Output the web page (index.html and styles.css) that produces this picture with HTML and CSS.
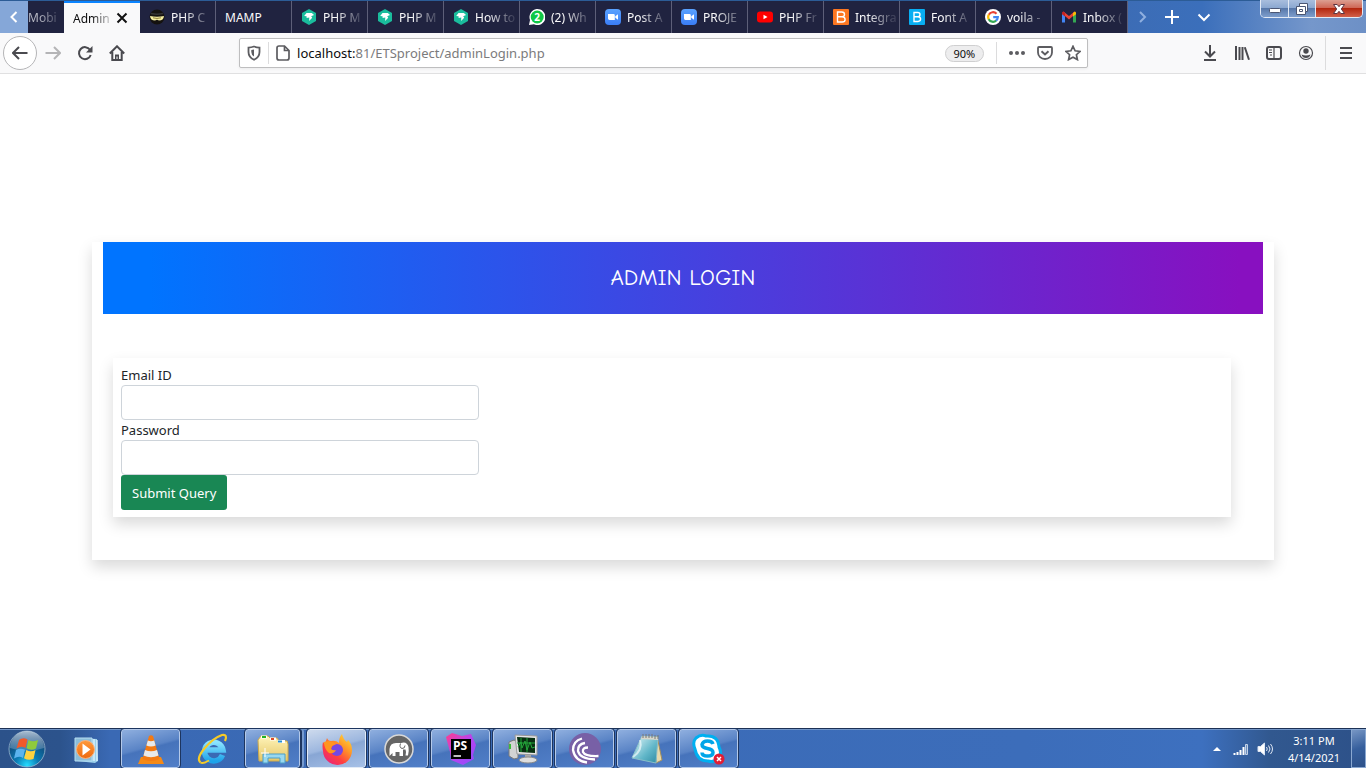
FILE: index.html
```html
<!DOCTYPE html>
<html lang="en">
<head>
<meta charset="utf-8">
<title>Admin Login</title>
<link rel="stylesheet" href="styles.css">
</head>
<body>
<svg class="defs" width="0" height="0" aria-hidden="true">
  <defs>
    <linearGradient id="zoomBlue" x1="0" y1="0" x2="0" y2="1"><stop offset="0" stop-color="#5aa2ff"/><stop offset="1" stop-color="#3a7df5"/></linearGradient>
    <linearGradient id="orange" x1="0" y1="0" x2="0" y2="1"><stop offset="0" stop-color="#ff9a3c"/><stop offset="1" stop-color="#ee6a10"/></linearGradient>
    <radialGradient id="orb" cx=".5" cy=".95" r=".8"><stop offset="0" stop-color="#25dcff"/><stop offset=".4" stop-color="#0b7cb4"/><stop offset="1" stop-color="#12406f"/></radialGradient>
    <linearGradient id="shine" x1="0" y1="0" x2="0" y2="1"><stop offset="0" stop-color="#dce8f2"/><stop offset="1" stop-color="#7fa3c4" stop-opacity=".5"/></linearGradient>
    <linearGradient id="ie" x1="0" y1="0" x2="0" y2="1"><stop offset="0" stop-color="#8ce4ff"/><stop offset="1" stop-color="#1da3ea"/></linearGradient>
    <linearGradient id="fox" x1="1" y1="0" x2=".2" y2="1"><stop offset="0" stop-color="#ffe83f"/><stop offset=".4" stop-color="#ff9527"/><stop offset=".7" stop-color="#ff4040"/><stop offset="1" stop-color="#e8237f"/></linearGradient>
    <linearGradient id="storm" x1="0" y1="0" x2="1" y2="1"><stop offset="0" stop-color="#ff3c8d"/><stop offset=".5" stop-color="#b744f0"/><stop offset="1" stop-color="#8d4cff"/></linearGradient>
    <linearGradient id="pad" x1="0" y1="0" x2="1" y2="1"><stop offset="0" stop-color="#e6f8fa"/><stop offset=".6" stop-color="#62b7c9"/><stop offset="1" stop-color="#2e8ba3"/></linearGradient>
    <linearGradient id="folder" x1="0" y1="0" x2="0" y2="1"><stop offset="0" stop-color="#fff4ba"/><stop offset="1" stop-color="#e5c767"/></linearGradient>
    <symbol id="gem" viewBox="0 0 16 16"><path d="M8 0l7 4v8l-7 4-7-4V4z" fill="#1abc9c"/><path d="M3.200 7l2.300-3h5.300L13 6l-2.800 1.300 1 1.400-3.100 3.200.2-3.300L5.600 9V7.300z" fill="#fff"/></symbol>
    <symbol id="camera" viewBox="0 0 16 16"><rect width="16" height="16" rx="4" fill="url(#zoomBlue)"/><path d="M3 5h5.500q1.300 0 1.300 1.300V11H4.400Q3 11 3 9.600zM10.300 7.300L13 5.300v5.400l-2.700-2z" fill="#fff"/></symbol>
  </defs>
</svg>
<div class="window">
  <header class="tabstrip">
    <button class="scroll-left" aria-label="Scroll tabs left"><svg width="12" height="14" viewBox="0 0 12 14"><path d="M8.500 2L3.500 7l5 5" fill="none" stroke="#fff" stroke-width="2"/></svg></button>
    <nav class="tabs">
      <a href="#" class="tab tab-cut"><span class="tab-label">Mobi</span></a>
      <a href="#" class="tab tab-active"><span class="tab-label">Admin</span><svg width="12" height="12" viewBox="0 0 12 12"><path d="M1.500 1.500l9 9m0-9l-9 9" stroke="#111" stroke-width="2"/></svg></a>
      <a href="#" class="tab"><svg width="16" height="16" viewBox="0 0 16 16"><circle cx="8" cy="8" r="7.500" fill="#15120f"/><path d="M2 4.500q6 1.500 12 0" stroke="#353535" stroke-width="1.500" fill="none"/><path d="M1 7q7 1.500 14 0-.5 4.500-5 4.500L8 10.800l-2 .7Q1.500 11.500 1 7z" fill="#f3eda1"/><path d="M4 8.800q4 1.300 8 0" stroke="#94823b" fill="none"/></svg><span class="tab-label">PHP C</span></a>
      <a href="#" class="tab"><span class="tab-label tab-whole">MAMP</span></a>
      <a href="#" class="tab"><svg width="16" height="16"><use href="#gem"/></svg><span class="tab-label">PHP M</span></a>
      <a href="#" class="tab"><svg width="16" height="16"><use href="#gem"/></svg><span class="tab-label">PHP M</span></a>
      <a href="#" class="tab"><svg width="16" height="16"><use href="#gem"/></svg><span class="tab-label">How to</span></a>
      <a href="#" class="tab"><svg width="16" height="16" viewBox="0 0 16 16"><path d="M0 16l1-5A8 8 0 1 1 5 15.300z" fill="#fff"/><circle cx="8.200" cy="8" r="6.500" fill="#10c846"/><text x="8" y="12" text-anchor="middle" class="badge-count">2</text></svg><span class="tab-label">(2) Wh</span></a>
      <a href="#" class="tab"><svg width="16" height="16"><use href="#camera"/></svg><span class="tab-label">Post A</span></a>
      <a href="#" class="tab"><svg width="16" height="16"><use href="#camera"/></svg><span class="tab-label">PROJE</span></a>
      <a href="#" class="tab"><svg width="16" height="16" viewBox="0 0 16 16"><rect y="2.500" width="16" height="11" rx="3" fill="#f00"/><path d="M6.500 5.800v4.400L10.500 8z" fill="#fff"/></svg><span class="tab-label">PHP Fr</span></a>
      <a href="#" class="tab"><svg width="16" height="16" viewBox="0 0 16 16"><rect width="16" height="16" rx="1" fill="#fd7721"/><path d="M4.500 3h4.300q2.700 0 2.700 2.400 0 2.200-2.700 2.400H4.500zM4.500 7.800h4.600q3 .1 3 2.600T9.100 13H4.500z" fill="none" stroke="#fff" stroke-width="1.400"/></svg><span class="tab-label">Integra</span></a>
      <a href="#" class="tab"><svg width="16" height="16" viewBox="0 0 16 16"><rect width="16" height="16" rx="1" fill="#08aef2"/><path d="M5 3.500h3.700q2.300 0 2.300 2 0 2.200-2.300 2.200H5zM5 7.700h4q2.600.1 2.600 2.400T9 12.500H5z" fill="none" stroke="#fff" stroke-width="1.400"/></svg><span class="tab-label">Font A</span></a>
      <a href="#" class="tab"><svg width="16" height="16" viewBox="0 0 16 16"><circle cx="8" cy="8" r="8" fill="#fff"/><g fill="none" stroke-width="2.200"><path d="M11.500 4.700A4.800 4.800 0 0 0 3.800 5.700" stroke="#ea4335"/><path d="M3.900 5.500a4.800 4.800 0 0 0 0 5" stroke="#fbbc05"/><path d="M3.700 10.200a4.800 4.800 0 0 0 7.500 1.300" stroke="#34a853"/><path d="M11 11.700A4.800 4.800 0 0 0 12.800 8.200H8.200" stroke="#4285f4"/></g></svg><span class="tab-label">voila -</span></a>
      <a href="#" class="tab"><svg width="16" height="16" viewBox="0 0 16 16"><path d="M1 4v9.500h3V7z" fill="#4285f4"/><path d="M12 7v6.500h3V4z" fill="#34a853"/><path d="M1 4.500L2.500 2.500 8 7l5.500-4.500L15 4.500 8 10.500z" fill="#ea4335"/><path d="M12 4l1.800-1.500Q15 2.500 15 4v1.300l-3 2.300z" fill="#fbbc04"/><path d="M1 4q0-1.500 1.500-1.500L4 4v3.600L1 5.300z" fill="#c5221f"/></svg><span class="tab-label">Inbox (</span></a>
    </nav>
    <div class="tab-tools">
      <button class="dim" aria-label="Scroll tabs right"><svg width="16" height="16" viewBox="0 0 16 16"><path d="M6 3l5 5-5 5" fill="none" stroke="#8fafdf" stroke-width="2"/></svg></button>
      <button aria-label="New tab"><svg width="16" height="16" viewBox="0 0 16 16"><path d="M8 1v14M1 8h14" stroke="#fff" stroke-width="2"/></svg></button>
      <button aria-label="List all tabs"><svg width="16" height="16" viewBox="0 0 16 16"><path d="M2.500 5.500L8 11l5.500-5.500" fill="none" stroke="#fff" stroke-width="2"/></svg></button>
    </div>
    <div class="window-controls">
      <button class="minimize" aria-label="Minimize"><svg width="14" height="12" viewBox="0 0 14 12"><rect x="1.500" y="5.500" width="11" height="4" rx="1" fill="#fff" stroke="#4b5673"/></svg></button>
      <button class="restore" aria-label="Restore"><svg width="14" height="14" viewBox="0 0 14 14"><path d="M4.500 1.500h8v8h-2v3h-9v-8h3z" fill="#fff" stroke="#4b5673"/><path d="M4.500 4.500h6v5M4.500 7.500h3v2h-3z" fill="none" stroke="#4b5673"/></svg></button>
      <button class="close" aria-label="Close"><svg width="14" height="12" viewBox="0 0 14 12"><path d="M1.500 1.500h3.700L7 3.700l1.800-2.200h3.700L9.300 6l3.200 4.500H8.800L7 8.300l-1.800 2.200H1.500L4.700 6z" fill="#fff" stroke="#5e3440"/></svg></button>
    </div>
  </header>

  <div class="toolbar">
    <div class="nav-buttons">
      <button class="back" aria-label="Back"><svg width="16" height="16" viewBox="0 0 16 16"><path d="M15.500 8H1.500M7 2L1 8l6 6" fill="none" stroke="#4a4a4f" stroke-width="2"/></svg></button>
      <button aria-label="Forward"><svg width="16" height="16" viewBox="0 0 16 16"><path d="M.5 8h14M9 2l6 6-6 6" fill="none" stroke="#b4b4b6" stroke-width="2"/></svg></button>
      <button aria-label="Reload"><svg width="16" height="16" viewBox="0 0 16 16"><path d="M13 4.800A6 6 0 1 0 13.700 10" fill="none" stroke="#4a4a4f" stroke-width="2"/><path d="M15.500 1v6.500H9z" fill="#4a4a4f"/></svg></button>
      <button aria-label="Home"><svg width="16" height="16" viewBox="0 0 16 16"><path d="M.8 8.500L8 1.300l7.200 7.200M3.300 7v7.900h9.400V7" fill="none" stroke="#4a4a4f" stroke-width="2"/><path d="M6 15V9.500h4V15z" fill="#4a4a4f"/><path d="M8 11.500v2.500" stroke="#fff"/></svg></button>
    </div>
    <div class="urlbar">
      <button aria-label="Tracking protection"><svg width="16" height="16" viewBox="0 0 16 16"><path d="M8 1.500q2.800.8 5.500 1.100V7q0 5.300-5.500 7.700Q2.500 12.300 2.500 7V2.600Q5.200 2.300 8 1.500z" fill="none" stroke="#5c5c60" stroke-width="1.800"/><path d="M8 4.500v7Q5.300 9.800 5.300 7V5z" fill="#5c5c60"/></svg></button>
      <span class="rule"></span>
      <svg class="page-icon" width="14" height="16" viewBox="0 0 14 16"><path d="M3 1h5.500L13 5.500V13q0 2-2 2H3q-2 0-2-2V3q0-2 2-2zM8.500 1v4.500H13" fill="none" stroke="#5c5c60" stroke-width="1.700"/></svg>
      <div class="address"><b>localhost:</b>81/ETSproject/adminLogin.php</div>
      <button class="zoom-level">90%</button>
      <span class="rule"></span>
      <div class="url-actions">
        <button aria-label="Page actions"><svg width="16" height="16" viewBox="0 0 16 16"><g fill="#5c5c60"><circle cx="2" cy="8" r="2"/><circle cx="8" cy="8" r="2"/><circle cx="14" cy="8" r="2"/></g></svg></button>
        <button aria-label="Save to Pocket"><svg width="16" height="16" viewBox="0 0 16 16"><path d="M2 2h12q1 0 1 1v4.500a7 6.500 0 0 1-14 0V3q0-1 1-1z" fill="none" stroke="#5c5c60" stroke-width="1.800"/><path d="M4.500 6.300L8 9.500l3.500-3.200" fill="none" stroke="#5c5c60" stroke-width="2"/></svg></button>
        <button aria-label="Bookmark"><svg width="16" height="16" viewBox="0 0 16 16"><path d="M8 1.300l2.100 4.500 5 .6-3.700 3.300 1 4.900L8 12.200l-4.400 2.400 1-4.900L.9 6.400l5-.6z" fill="none" stroke="#5c5c60" stroke-width="1.700"/></svg></button>
      </div>
    </div>
    <div class="tool-buttons">
      <button aria-label="Downloads"><svg width="16" height="16" viewBox="0 0 16 16"><path d="M8 0v11M3 6.500l5 5 5-5M2 15h12" fill="none" stroke="#4a4a4f" stroke-width="2"/></svg></button>
      <button aria-label="Library"><svg width="16" height="16" viewBox="0 0 16 16"><path d="M2 1v14M5.500 2v13M8.500 2v13M10.800 2.300l4.200 12.500" stroke="#4a4a4f" stroke-width="2"/></svg></button>
      <button aria-label="Sidebars"><svg width="16" height="16" viewBox="0 0 16 16"><rect x="1" y="2" width="14" height="12" rx="2" fill="none" stroke="#4a4a4f" stroke-width="2"/><path d="M8 2v12M3 5h3M3 7.500h3M4 10h2" stroke="#4a4a4f" stroke-width="1.200"/></svg></button>
      <button aria-label="Account"><svg width="16" height="16" viewBox="0 0 16 16"><circle cx="8" cy="8" r="6.500" fill="none" stroke="#4a4a4f" stroke-width="1.200"/><circle cx="8" cy="6" r="2.700" fill="#4a4a4f"/><path d="M3.500 9.500q2 1 4.500 1t4.500-1Q11.500 13 8 13T3.500 9.500z" fill="#4a4a4f"/></svg></button>
      <span class="rule menu-rule"></span>
      <button class="menu" aria-label="Menu"><svg width="16" height="16" viewBox="0 0 16 16"><path d="M2 3h12M2 8h12M2 13h12" stroke="#4a4a4f" stroke-width="2"/></svg></button>
    </div>
  </div>

  <main class="page">
    <section class="card">
      <h1 class="card-title">ADMIN LOGIN</h1>
      <form class="login">
        <label for="email">Email ID</label>
        <input id="email" type="email">
        <label for="password">Password</label>
        <input id="password" type="password">
        <button type="submit">Submit Query</button>
      </form>
    </section>
  </main>

  <footer class="taskbar">
    <button class="start" aria-label="Start"><svg width="38" height="38" viewBox="0 0 38 38"><circle cx="19" cy="19" r="18" fill="url(#orb)" stroke="#9db8d0" stroke-opacity=".8"/><path d="M2 18a17 17 0 0 1 34 0Q19 24 2 18z" fill="url(#shine)" opacity=".75"/><path d="M11 10q4-3 8.500-.5L17.500 18q-4.500-2.500-9 .5z" fill="#f0592a"/><path d="M20.500 10q4.500 2.500 9.500 0L28 18.500q-5 2.500-9.500-.3z" fill="#8fca3c"/><path d="M8 20q4.500-2.500 9-.2L15 28q-4-2.500-9 .5z" fill="#5bb4ee"/><path d="M18.300 20q4.500 2.500 9.200 0L25.500 29q-5 2-9.500-.8z" fill="#ffd23f"/></svg></button>
    <div class="tasks">
      <button class="task flat" aria-label="Media Player"><svg width="32" height="32" viewBox="0 0 32 32"><path d="M4 5l20 1 1 22-3 2L4 28z" fill="#9bd0ea"/><path d="M21 6v22M24 7v21" stroke="#e6f7ff" stroke-width="1.200"/><path d="M2 5h17v23H2z" fill="#8bbdd9" stroke="#b8def1"/><circle cx="12.500" cy="16.500" r="9" fill="url(#orange)" stroke="#f9b27d"/><path d="M9.500 10.500v12l8-6z" fill="#fff"/></svg></button>
      <button class="task" aria-label="VLC"><svg width="32" height="32" viewBox="0 0 32 32"><path d="M6 24h20l3 7H3z" fill="#f58a16"/><path d="M14 3q2-1.500 4 0l6.500 23q-8.500 4-17 0z" fill="#f37a14"/><path d="M12.800 7.500q3.200 1.300 6.400 0l1.400 5q-4.600 1.800-9.200 0zM10 17q6 2.500 12 0l1.500 5.500q-7.500 3.500-15 0z" fill="#e8e9eb"/></svg></button>
      <button class="task flat" aria-label="Internet Explorer"><svg width="32" height="32" viewBox="0 0 32 32"><path d="M25.500 22A9.300 9.300 0 1 1 26 17H10" fill="none" stroke="url(#ie)" stroke-width="5.500"/><path d="M3.500 29.500Q-1 26 7 16 16 5 25 2q6-1 3 6" fill="none" stroke="#f6cb28" stroke-width="2.200"/><path d="M3.500 29.500Q6 31 12 27.500" fill="none" stroke="#f6cb28" stroke-width="2"/></svg></button>
      <button class="task stacked" aria-label="Explorer"><svg width="34" height="32" viewBox="0 0 34 32"><path d="M2 7l3-4h7l2 2h7l2 3h8l1 3v17H3z" fill="url(#folder)" stroke="#cfaa4a"/><path d="M5 4h6M14 6h6M22 8.500h7" stroke="#fff" stroke-width="3"/><path d="M6 4h4" stroke="#22b322" stroke-width="2"/><path d="M15 6h3" stroke="#de4a25" stroke-width="2"/><path d="M22 8.500h4" stroke="#258fd3" stroke-width="2"/><path d="M7 30V21h22v9h-5v-5H12v5z" fill="#98d8ef" stroke="#4b9fc9"/><path d="M9 15v9M5 20h8" stroke="#fff"/></svg></button>
      <button class="task current" aria-label="Firefox"><svg width="32" height="32" viewBox="0 0 32 32"><path d="M2 9l2 2 2-6q1 3 4 3 5-1 8 2 0-6 3-9 1 5 5 8l1-2q4 4 4 10a14 14 0 0 1-29 1Q1 13 2 9z" fill="url(#fox)"/><circle cx="16" cy="17" r="6" fill="#7448e4"/><path d="M3 9q7-3 12 2l-4 2-1 3q2 2 5 1-2 4-7 3Q3 16 3 9z" fill="#ff951f"/></svg></button>
      <button class="task" aria-label="MAMP"><svg width="32" height="32" viewBox="0 0 32 32"><circle cx="16" cy="16" r="14" fill="#656565" stroke="#d8d8d8" stroke-width="1.500"/><path d="M6.500 23V16q.5-6 6.500-6h5q6-2 7.500 4 .7 4-.5 8.500h-2.500q1-4 0-6h-2.500V23H16.500v-4h-4v4H9.500v-3z" fill="#fff"/><path d="M17.500 10.500q-1.500 4 1.500 5 3 0 3-3" stroke="#656565" fill="none"/></svg></button>
      <button class="task" aria-label="PhpStorm"><svg width="32" height="32" viewBox="0 0 32 32"><path d="M1 4l6-4 10 3 9-2 5 11-3 10 1 4-11 6-12-5-1-8z" fill="url(#storm)"/><rect x="6" y="6" width="20" height="20" fill="#000"/><text x="8" y="17" class="storm-name">PS</text><path d="M8.500 23H16" stroke="#fff" stroke-width="1.500"/></svg></button>
      <button class="task" aria-label="Resource Monitor"><svg width="32" height="32" viewBox="0 0 32 32"><path d="M2 9l5-2 4 2v16l-4 1-5-3z" fill="#d3d3d3" stroke="#7a7a7a"/><path d="M3 11v5" stroke="#3cbd38" stroke-width="2"/><path d="M8 2l22 1v19l-20-1z" fill="#e6e6e6" stroke="#999"/><path d="M10 4l18 1v15l-16-1z" fill="#092f12"/><path d="M11 14l3-5 1 6 3-7 2 9 3-8 2 6 3-1M10 10h18M14 5v14M20 5v14" fill="none" stroke="#24a73b"/><path d="M18 22h6v4h-6z" fill="#aaa"/><ellipse cx="21" cy="27" rx="9" ry="3" fill="#ddd" stroke="#8b8b8b"/></svg></button>
      <button class="task" aria-label="BitTorrent"><svg width="32" height="32" viewBox="0 0 32 32"><circle cx="16" cy="16" r="16" fill="#7860a6"/><g fill="none" stroke="#fff" stroke-width="2.300"><path d="M13 5.500Q4 8 4 17 6 28 18 29.500"/><path d="M16 10Q8.500 11 9 18q2 8 17 8.500"/><path d="M19 14.500Q13 14.500 14 19q2 4.500 15.500 4"/></g></svg></button>
      <button class="task" aria-label="Notepad"><svg width="32" height="32" viewBox="0 0 32 32"><path d="M26 3l5 24-6 3z" fill="#e6d9ac" stroke="#a6905c"/><path d="M11 3l16 1-2 26L1 25z" fill="url(#pad)" stroke="#8abfc9"/><path d="M11 3l16 1v3L10 6z" fill="#d7d7cb"/><path d="M12 1v4m3-4v4m3-4v4m3-4v4m3-3v4m3-4v4" stroke="#777"/><path d="M9 7q3 10-7 17" fill="none" stroke="#fff" stroke-width="2" opacity=".6"/></svg></button>
      <button class="task" aria-label="Skype"><svg width="34" height="32" viewBox="0 0 34 32"><path d="M3 16Q0 9 4 5q5-4 10-2 12-1 13 11 3 6 0 11-5 5-11 3Q5 28 3 16z" fill="#fff" stroke="#00aff0" stroke-width="3"/><path d="M21 11q-1-3-5.500-3T10 11.500q0 3 5.500 4t5.500 4q0 3.500-5.500 3.500T10 19.500" fill="none" stroke="#00a5e8" stroke-width="3.500"/><circle cx="27" cy="26" r="5.500" fill="#e11d35"/><path d="M25 24l4 4m0-4l-4 4" stroke="#fff" stroke-width="1.500"/></svg></button>
    </div>
    <div class="tray">
      <button aria-label="Show hidden icons"><svg width="8" height="6" viewBox="0 0 8 6"><path d="M0 5l4-4 4 4z" fill="#fff"/></svg></button>
      <button aria-label="Network"><svg width="16" height="14" viewBox="0 0 16 14"><path d="M1.500 13v-2M4.500 13v-3M7.500 13V8M10.500 13V5" stroke="#fff" stroke-width="2"/><path d="M12.500 12.500v-10h2v10z" fill="#6d8fbd" stroke="#c4d3e8"/></svg></button>
      <button aria-label="Volume"><svg width="16" height="14" viewBox="0 0 16 14"><path d="M1 4.500h2.500L7.500 1v12l-4-3.500H1z" fill="#fff" stroke="#dce6f4"/><path d="M9.500 5q1.500 2 0 4M11.500 3.500q3 3.500 0 7M13.500 2q4 5 0 10" fill="none" stroke="#e3ebf7"/></svg></button>
      <button class="clock"><span>3:11 PM</span><span>4/14/2021</span></button>
      <button class="show-desktop" aria-label="Show desktop"></button>
    </div>
  </footer>
</div>
</body>
</html>
```
FILE: styles.css
```css
* { box-sizing: border-box; }

body {
  margin: 0;
  font-family: "Segoe UI", "Noto Sans", sans-serif;
  font-size: 12px;
  color: #212529;
}

button {
  display: flex;
  align-items: center;
  justify-content: center;
  padding: 0;
  border: 0;
  background: none;
  color: inherit;
  font: inherit;
}

svg { flex: none; display: block; }
.defs { position: absolute; }

.window {
  display: flex;
  flex-direction: column;
  min-height: 100vh;
  background: #fff;
}

/* Tab strip */
.tabstrip {
  position: relative;
  display: flex;
  height: 33px;
  border-top: 1px solid #2c5c96;
  background: linear-gradient(90deg, #3c6cb5 82%, #3b6fbb 88%, #7597cb 96%, #6d90c6);
}
.scroll-left {
  width: 28px;
  background: #85a7d8;
}
.tabs { display: flex; }
.tab {
  display: flex;
  align-items: center;
  gap: 6px;
  width: 76px;
  padding: 0 2px 0 9px;
  border-right: 1px solid #5d5f78;
  background: #202340;
  color: #f9f9fa;
  text-decoration: none;
}
.tab-label {
  flex: 1;
  white-space: nowrap;
  mask-image: linear-gradient(90deg, #000 30%, rgba(0, 0, 0, 0.15) 90%);
}
.tab-whole { mask-image: none; }
.tab-cut {
  width: 36px;
  padding: 0;
  border: 0;
  color: #b4b5c0;
}
.tab-active {
  padding-right: 12px;
  border: 0;
  border-top: 2px solid #0a84ff;
  background: #f9f9fa;
  color: #0c0c0d;
}
.tab-active .tab-label { mask-image: linear-gradient(90deg, #000 50%, transparent 115%); }
.badge-count { font: bold 10px "Noto Sans", sans-serif; fill: #fff; }
.tab-tools { display: flex; }
.tab-tools button { width: 32px; }
.tab-tools .dim { width: 28px; }
.window-controls {
  position: absolute;
  top: -1px;
  right: 3px;
  display: flex;
  height: 18px;
  border: 1px solid #e3eaf5;
  border-top: 0;
  border-radius: 0 0 5px 5px;
  overflow: hidden;
}
.window-controls button {
  border-right: 1px solid #e3eaf5;
  background: linear-gradient(#a9bedd, #8ca8d1 45%, #5878aa 50%, #7d9dcc);
}
.window-controls .minimize { width: 28px; }
.window-controls .restore { width: 27px; }
.window-controls .close {
  width: 46px;
  border: 0;
  background: linear-gradient(#dc9f91, #cf6857 45%, #b3270f 50%, #d2604a);
}

/* Navigation toolbar */
.toolbar {
  display: flex;
  align-items: center;
  justify-content: space-between;
  height: 41px;
  border-bottom: 1px solid #e0e0e1;
  background: #f9f9fa;
}
.nav-buttons { display: flex; align-items: center; width: 133px; padding-left: 3px; }
.nav-buttons button { width: 32px; height: 32px; }
.nav-buttons .back {
  width: 34px;
  height: 34px;
  border: 1px solid #b5b5b7;
  border-radius: 50%;
  background: #fff;
}
.urlbar {
  display: flex;
  align-items: center;
  width: calc((100% - 305px) * 0.8);
  height: 30px;
  padding: 0 6px;
  border: 1px solid #bebebf;
  border-radius: 2px;
  background: #fff;
  box-shadow: 0 1px 3px rgba(0, 0, 0, 0.06);
}
.rule { width: 1px; height: 22px; background: #dcdcdd; }
.urlbar > .rule:first-of-type { margin: 0 7px 0 6px; }
.page-icon { margin-right: 7px; }
.address {
  flex: 1;
  font-size: 13px;
  color: #7b7b7c;
}
.address b { font-weight: 400; color: #0c0c0d; }
.zoom-level {
  width: 39px;
  height: 17px;
  margin-right: 12px;
  border: 1px solid #cfcfd0;
  border-radius: 9px;
  background: #ededee;
  font-size: 11px;
  color: #0c0c0d;
}
.url-actions { display: flex; gap: 12px; padding-left: 12px; }
.tool-buttons { display: flex; align-items: center; width: 172px; }
.tool-buttons button { width: 32px; height: 32px; }
.menu-rule { height: 34px; margin-left: 3px; }
.tool-buttons .menu { width: 40px; }

/* Login page */
.page {
  flex: 1;
  display: flex;
  align-items: center;
  justify-content: center;
  padding: 24px 92px;
}
.card {
  flex: 1;
  padding: 0 11px 43px;
  background: #fff;
  box-shadow: 0 7px 14px rgba(0, 0, 0, 0.15);
}
.card-title {
  margin: 0 0 44px;
  padding: 20px;
  background: linear-gradient(90deg, #0074ff 4%, #8810c0 98%);
  color: #fff;
  font-family: "Comic Sans MS", "Comic Neue", "Noto Sans", sans-serif;
  font-size: 23px;
  font-weight: 400;
  line-height: 32px;
  text-align: center;
}
.login {
  display: flex;
  flex-direction: column;
  align-items: flex-start;
  margin: 0 32px 0 10px;
  padding: 7px 8px;
  background: #fff;
  box-shadow: 0 7px 14px rgba(0, 0, 0, 0.15);
  font-size: 13px;
  line-height: 20px;
}
.login input {
  width: 32.5%;
  height: 35px;
  padding: 5px 11px;
  border: 1px solid #ced4da;
  border-radius: 4px;
  background: #fff;
  font: inherit;
}
.login button {
  height: 35px;
  padding: 0 11px;
  border-radius: 3px;
  background: #198754;
  color: #fff;
}

/* Taskbar */
.taskbar {
  display: flex;
  height: 40px;
  border-top: 1px solid #1c3155;
  background: linear-gradient(90deg, #2c528a 0, #2c538c 60px, #3a69b4 110px, #3c6dba 75%, #3d70bf 88%, #31588f 93%, #2d5189);
  box-shadow: inset 0 1px 0 #7296c8;
}
.start { width: 54px; margin-right: 5px; }
.tasks { display: flex; flex: 1; gap: 3px; }
.task {
  width: 59px;
  border: 1px solid #b4c9e9;
  border-radius: 3px;
  outline: 1px solid #1d355f;
  background: linear-gradient(165deg, #8fafdf, #5a84c6 45%, #4673bb 50%, #517fc8);
}
.task.flat { border-color: transparent; outline: 0; background: none; }
.task.current {
  border-color: #e1eaf6;
  background: linear-gradient(165deg, #cddaed, #9db7df 45%, #88a6d4 50%, #a7c1e7);
}
.task.stacked { width: 55px; margin-right: 4px; box-shadow: 2px 0 0 #1d355f, 4px 0 0 #779bcf; }
.storm-name { font: bold 12px "Open Sans", sans-serif; fill: #fff; }
.tray { display: flex; align-items: center; color: #fff; }
.tray button { width: 24px; height: 100%; }
.tray .clock {
  flex-direction: column;
  width: 74px;
  font-size: 11px;
  line-height: 17px;
}
.tray .show-desktop {
  width: 15px;
  border: 1px solid #8aa8d1;
  background: linear-gradient(160deg, #7796c4, #365f9d 50%, #2d5189);
}
```
